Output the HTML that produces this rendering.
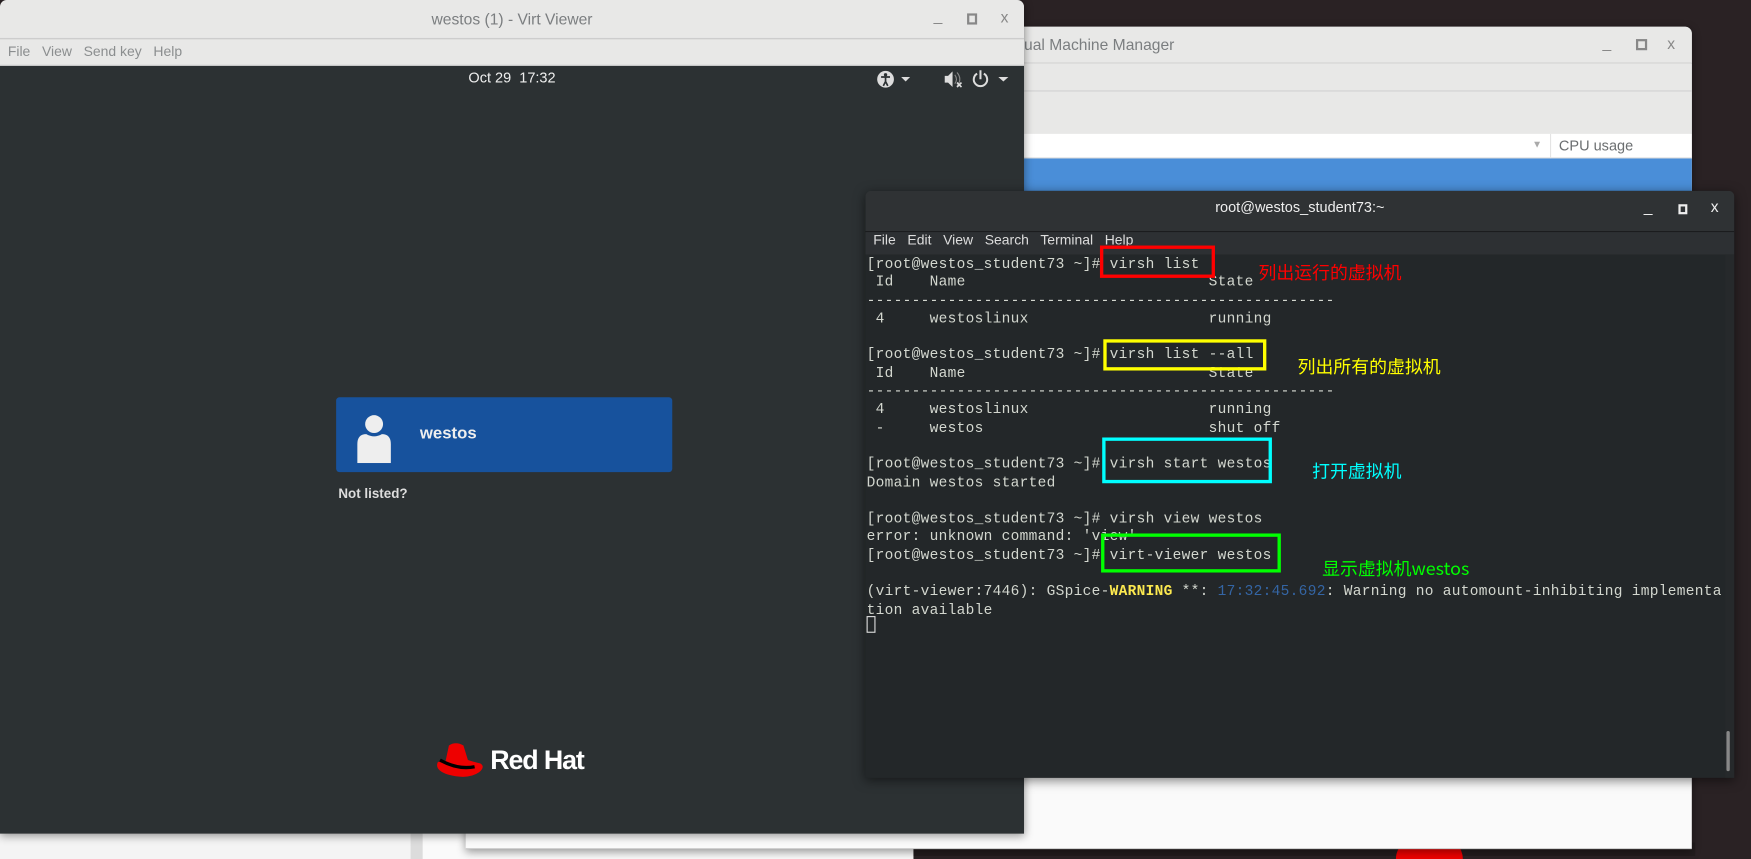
<!DOCTYPE html>
<html><head><meta charset="utf-8"><style>
html,body{margin:0;padding:0;width:1751px;height:856px;overflow:hidden;background:#2a2224;}
#s{position:absolute;left:0;top:0;width:1568px;height:767px;transform:scale(1.11671,1.11604);transform-origin:0 0;font-family:"Liberation Sans","Noto Sans CJK SC",sans-serif;}
.a{position:absolute;}
.mono{font-family:"Liberation Mono",monospace;font-size:13px;line-height:16.3px;color:#d3d7cf;white-space:pre;letter-spacing:0.26px;}
.box{position:absolute;border:3px solid;box-sizing:border-box;}
.cn{position:absolute;font-family:"Noto Sans CJK SC","WenQuanYi Zen Hei",sans-serif;font-size:16px;}
</style></head><body><div id="s">
<div class="a" style="left:0;top:740px;width:368px;height:30px;background:#f4f4f4"></div>
<div class="a" style="left:368px;top:740px;width:10px;height:30px;background:#dcdcdc"></div>
<div class="a" style="left:378px;top:740px;width:440px;height:30px;background:#fafafa"></div>
<div class="a" style="left:818px;top:755px;width:700px;height:12px;background:#231d1e"></div>
<div class="a" style="left:1250px;top:750px;width:60px;height:20px;border-radius:30px 30px 0 0;background:#e00"></div>
<!-- VMM -->
<div class="a" style="left:417px;top:24px;width:1098px;height:736px;background:#fafafa;border-radius:6px 6px 0 0;border-bottom:1px solid #bbb;box-shadow:0 2px 8px rgba(0,0,0,.4)">
 <div class="a" style="left:0;top:0;width:1098px;height:32px;background:#e8e8e7;border-bottom:1px solid #cfcfcf;border-radius:6px 6px 0 0"></div>
 <div class="a" style="left:500px;top:8px;font-size:14px;color:#7b7e80">ual Machine Manager</div>
 <div class="a" style="left:1018px;top:6px;font-size:14px;color:#888">_</div>
 <div class="a" style="left:1048px;top:11px;width:6px;height:6px;border:2px solid #888"></div>
 <div class="a" style="left:1076px;top:7px;font-size:14px;color:#888">x</div>
 <div class="a" style="left:0;top:33px;width:1098px;height:24px;background:#e8e8e7;border-bottom:1px solid #d0d0d0"></div>
 <div class="a" style="left:0;top:58px;width:1098px;height:38px;background:#e8e8e7"></div>
 <div class="a" style="left:0;top:96px;width:1098px;height:21px;background:#fff;border-bottom:1px solid #ddd"></div>
 <div class="a" style="left:955px;top:100px;font-size:9px;color:#aaa">▼</div>
 <div class="a" style="left:971px;top:96px;width:1px;height:22px;background:#e4e4e4"></div>
 <div class="a" style="left:979px;top:99px;font-size:13px;color:#6b6e70">CPU usage</div>
 <div class="a" style="left:0;top:118px;width:1098px;height:30px;background:#4a8ed8"></div>
</div>
<!-- Virt Viewer -->
<div class="a" style="left:0;top:0;width:917px;height:747px;background:#2c3133;box-shadow:0 2px 8px rgba(0,0,0,.4);border-radius:6px 6px 0 0;overflow:hidden">
 <div class="a" style="left:0;top:0;width:917px;height:34px;background:#e8e8e7;border-bottom:1px solid #cdcdcd"></div>
 <div class="a" style="left:0;top:9px;width:917px;text-align:center;font-size:14px;color:#7b7e80">westos (1) - Virt Viewer</div>
 <div class="a" style="left:836px;top:6px;font-size:14px;color:#888">_</div>
 <div class="a" style="left:866px;top:12px;width:5px;height:6px;border:2px solid #888"></div>
 <div class="a" style="left:896px;top:7px;font-size:14px;color:#888">x</div>
 <div class="a" style="left:0;top:35px;width:917px;height:23px;background:#e8e8e7;border-bottom:1px solid #ccc"></div>
 <div class="a" style="left:7px;top:39px;font-size:12.5px;color:#8b8e8f">File&nbsp;&nbsp;&nbsp;View&nbsp;&nbsp;&nbsp;Send key&nbsp;&nbsp;&nbsp;Help</div>
 <div class="a" style="left:0;top:62px;width:917px;text-align:center;font-size:13px;color:#eee">Oct 29&nbsp; 17:32</div>
 <svg class="a" style="left:780px;top:61px" width="130" height="20">
  <circle cx="13" cy="10" r="7.5" fill="#ddd"/><circle cx="13" cy="6" r="1.5" fill="#2c3133"/><path d="M9 8h8M13 8v4l-2 4M13 12l2 4" stroke="#2c3133" stroke-width="1.5" fill="none"/>
  <path d="M27 8h8l-4 4z" fill="#ddd"/>
  <path d="M66 7h3l4-4v14l-4-4h-3z" fill="#ddd"/><path d="M75 6q3 4 0 8M77 4q5 6 0 12" stroke="#888" fill="none"/><path d="M77 13l4 4M81 13l-4 4" stroke="#ddd" stroke-width="1.5"/>
  <path d="M95 5a6 6 0 1 0 6 0M98 2v8" stroke="#ddd" stroke-width="1.8" fill="none"/>
  <path d="M114 8h9l-4.5 4z" fill="#ddd"/>
 </svg>
 <div class="a" style="left:301px;top:356px;width:301px;height:67px;background:#17529d;border-radius:3px"></div>
 <svg class="a" style="left:316px;top:367px" width="40" height="48"><circle cx="19" cy="13" r="8" fill="#eee"/><path d="M4 48v-17q0-9 8-9q7 4 14 0q8 0 8 9v17z" fill="#eee"/></svg>
 <div class="a" style="left:376px;top:380px;font-size:15px;font-weight:bold;color:#eee">westos</div>
 <div class="a" style="left:303px;top:435px;font-size:12px;font-weight:bold;color:#ddd">Not listed?</div>
 <svg class="a" style="left:390px;top:663px" width="48" height="38"><path d="M12 5q6-4 13 0l4 13q6 2 11 3q5 3-1 8q-10 7-28 2q-12-4-9-11q3-2 7-1z" fill="#e00"/><path d="M4 18q16 9 31 6" stroke="#000" stroke-width="3" fill="none"/></svg>
 <div class="a" style="left:439px;top:668px;font-size:24px;font-weight:bold;color:#fff;letter-spacing:-1px">Red Hat</div>
</div>
<!-- Terminal -->
<div class="a" style="left:775px;top:171px;width:778px;height:526px;background:#232729;border-radius:5px 5px 0 0;box-shadow:0 2px 10px rgba(0,0,0,.5);overflow:hidden">
 <div class="a" style="left:0;top:0;width:778px;height:36px;background:#2f3234;border-bottom:1px solid #1b1d1e"></div>
 <div class="a" style="left:0;top:7px;width:778px;text-align:center;font-size:13px;color:#eee">root@westos_student73:~</div>
 <div class="a" style="left:697px;top:6px;font-size:14px;color:#eee">_</div>
 <div class="a" style="left:728px;top:12px;width:4px;height:5px;border:2px solid #eee"></div>
 <div class="a" style="left:757px;top:6px;font-size:14px;color:#eee">x</div>
 <div class="a" style="left:0;top:37px;width:778px;height:20px;background:#2d3033"></div>
 <div class="a" style="left:7px;top:37px;font-size:12.5px;color:#ddd">File&nbsp;&nbsp; Edit&nbsp;&nbsp; View&nbsp;&nbsp; Search&nbsp;&nbsp; Terminal&nbsp;&nbsp; Help</div>
 <div class="a" style="left:770px;top:57px;width:8px;height:469px;background:#26292b"></div>
 <div class="a" style="left:771px;top:484px;width:3px;height:36px;background:#888;border-radius:2px"></div>
 <div class="a mono" style="left:1px;top:58px">[root@westos_student73 ~]# virsh list
 Id    Name                           State
----------------------------------------------------
 4     westoslinux                    running

[root@westos_student73 ~]# virsh list --all
 Id    Name                           State
----------------------------------------------------
 4     westoslinux                    running
 -     westos                         shut off

[root@westos_student73 ~]# virsh start westos
Domain westos started

[root@westos_student73 ~]# virsh view westos
error: unknown command: 'view'
[root@westos_student73 ~]# virt-viewer westos

(virt-viewer:7446): GSpice-<b style="color:#fce94f">WARNING</b> **: <span style="color:#3465a4">17:32:45.692</span>: Warning no automount-inhibiting implementa
tion available
</div>
 <div class="a" style="left:1px;top:381px;width:8px;height:15px;border:1px solid #ddd;box-sizing:border-box"></div>
</div>
<div class="box" style="left:985px;top:220px;width:103px;height:29px;border-color:#f00"></div>
<div class="box" style="left:988px;top:304px;width:146px;height:28px;border-color:#ff0"></div>
<div class="box" style="left:987px;top:392px;width:152px;height:41px;border-color:#0ff"></div>
<div class="box" style="left:986px;top:478px;width:161px;height:35px;border-color:#0f0"></div>
<div class="cn" style="left:1127px;top:231px;color:#f00">列出运行的虚拟机</div>
<div class="cn" style="left:1162px;top:315px;color:#ff0">列出所有的虚拟机</div>
<div class="cn" style="left:1175px;top:409px;color:#0ff">打开虚拟机</div>
<div class="cn" style="left:1184px;top:496px;color:#0f0">显示虚拟机westos</div>
</div></body></html>
